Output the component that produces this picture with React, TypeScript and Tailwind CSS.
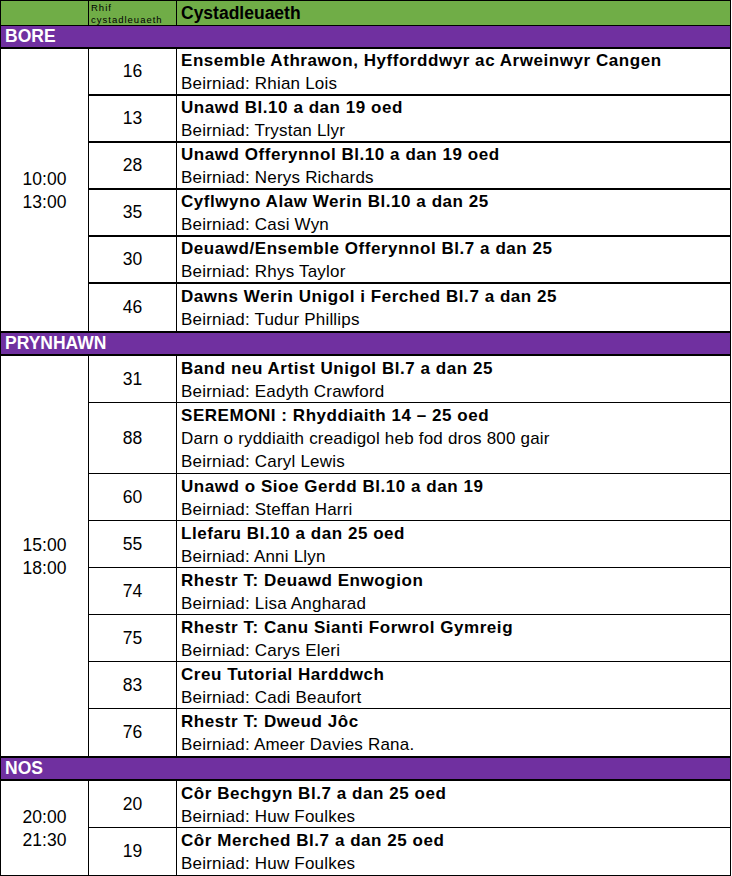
type Entry = { num: string; title: string; lines: string[] };
type Section = { label: string; time: [string, string]; thick: boolean; entries: Entry[] };

const sections: Section[] = [
  {
    label: 'BORE',
    time: ['10:00', '13:00'],
    thick: true,
    entries: [
      { num: '16', title: 'Ensemble Athrawon, Hyfforddwyr ac Arweinwyr Cangen', lines: ['Beirniad: Rhian Lois'] },
      { num: '13', title: 'Unawd Bl.10 a dan 19 oed', lines: ['Beirniad: Trystan Llyr'] },
      { num: '28', title: 'Unawd Offerynnol Bl.10 a dan 19 oed', lines: ['Beirniad: Nerys Richards'] },
      { num: '35', title: 'Cyflwyno Alaw Werin Bl.10 a dan 25', lines: ['Beirniad: Casi Wyn'] },
      { num: '30', title: 'Deuawd/Ensemble Offerynnol Bl.7 a dan 25', lines: ['Beirniad: Rhys Taylor'] },
      { num: '46', title: 'Dawns Werin Unigol i Ferched Bl.7 a dan 25', lines: ['Beirniad: Tudur Phillips'] },
    ],
  },
  {
    label: 'PRYNHAWN',
    time: ['15:00', '18:00'],
    thick: false,
    entries: [
      { num: '31', title: 'Band neu Artist Unigol Bl.7 a dan 25', lines: ['Beirniad: Eadyth Crawford'] },
      {
        num: '88',
        title: 'SEREMONI : Rhyddiaith 14 – 25 oed',
        lines: ['Darn o ryddiaith creadigol heb fod dros 800 gair', 'Beirniad: Caryl Lewis'],
      },
      { num: '60', title: 'Unawd o Sioe Gerdd Bl.10 a dan 19', lines: ['Beirniad: Steffan Harri'] },
      { num: '55', title: 'Llefaru Bl.10 a dan 25 oed', lines: ['Beirniad: Anni Llyn'] },
      { num: '74', title: 'Rhestr T: Deuawd Enwogion', lines: ['Beirniad: Lisa Angharad'] },
      { num: '75', title: 'Rhestr T: Canu Sianti Forwrol Gymreig', lines: ['Beirniad: Carys Eleri'] },
      { num: '83', title: 'Creu Tutorial Harddwch', lines: ['Beirniad: Cadi Beaufort'] },
      { num: '76', title: 'Rhestr T: Dweud Jôc', lines: ['Beirniad: Ameer Davies Rana.'] },
    ],
  },
  {
    label: 'NOS',
    time: ['20:00', '21:30'],
    thick: false,
    entries: [
      { num: '20', title: 'Côr Bechgyn Bl.7 a dan 25 oed', lines: ['Beirniad: Huw Foulkes'] },
      { num: '19', title: 'Côr Merched Bl.7 a dan 25 oed', lines: ['Beirniad: Huw Foulkes'] },
    ],
  },
];

function EntryRow({ entry, last, thick }: { entry: Entry; last: boolean; thick: boolean }) {
  const tall = entry.lines.length > 1;
  return (
    <div
      className={[
        'flex',
        tall ? 'h-[71px]' : 'h-[47px]',
        last ? '' : thick ? 'border-b-2 border-black' : 'border-b border-black',
      ].join(' ')}
    >
      <div className="w-[88px] shrink-0 border-r border-black flex items-center justify-center text-[17.5px]">
        {entry.num}
      </div>
      <div className="flex-1 min-w-0 pl-[4px] pt-[1px] flex flex-col justify-center leading-[23px]">
        <p className="text-[17px] font-bold tracking-[0.55px] whitespace-nowrap">{entry.title}</p>
        {entry.lines.map((l) => (
          <p key={l} className="text-[17px] tracking-[0.2px] whitespace-nowrap">
            {l}
          </p>
        ))}
      </div>
    </div>
  );
}

export default function App() {
  return (
    <div className="min-h-screen bg-white text-black font-['Liberation_Sans',Arial,sans-serif]">
      <div className="w-[731px] border-x border-black">
        <div className="flex h-[26px] border-y border-black bg-[#70ad47]">
          <div className="w-[88px] shrink-0 border-r border-black" />
          <div className="w-[88px] shrink-0 border-r border-black pl-[2px] pt-[1px] text-[9.5px] leading-[12px] tracking-[1px] whitespace-nowrap">
            Rhif
            <br />
            cystadleuaeth
          </div>
          <div className="flex-1 flex items-center pl-[4px] text-[17.5px] font-bold">Cystadleuaeth</div>
        </div>

        {sections.map((s, i) => (
          <div key={s.label}>
            <div
              className={[
                'flex items-center border-b-2 border-black bg-[#7030a0] pl-[4px] text-[17.5px] font-bold text-white',
                i > 0 ? 'h-[25px] border-t-2' : 'h-[23px]',
              ].join(' ')}
            >
              {s.label}
            </div>
            <div className="flex">
              <div className="w-[88px] shrink-0 border-r border-black flex flex-col items-center justify-center pt-[1px] text-[17.5px] leading-[23px]">
                <span>{s.time[0]}</span>
                <span>{s.time[1]}</span>
              </div>
              <div className="flex-1 min-w-0">
                {s.entries.map((e, j) => (
                  <EntryRow key={e.num} entry={e} thick={s.thick} last={j === s.entries.length - 1} />
                ))}
              </div>
            </div>
          </div>
        ))}
        <div className="border-b border-black" />
      </div>
    </div>
  );
}
